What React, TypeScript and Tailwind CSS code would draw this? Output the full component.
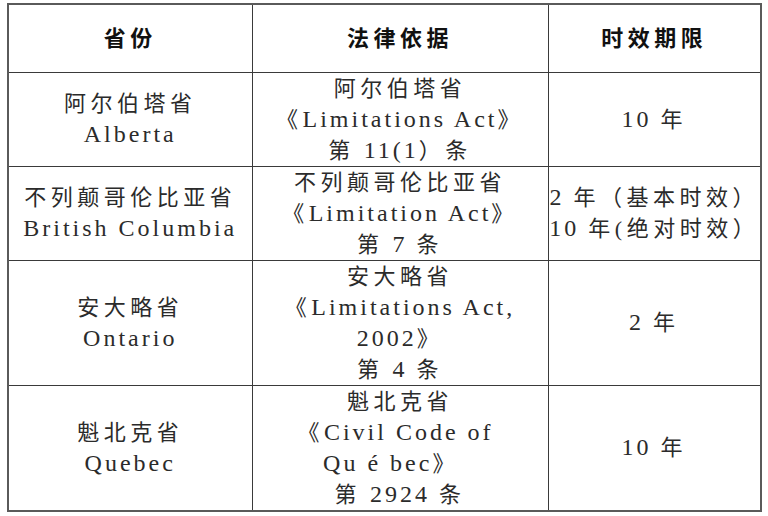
const zh = 'text-[22px] tracking-[4.5px]';

function Cell({ lines }: { lines: React.ReactNode[] }) {
  return (
    <td className="border border-[#3a3a3a] p-0 text-center align-middle">
      <div className="flex flex-col items-center">
        {lines.map((l, i) => (
          <div key={i} className="whitespace-pre leading-[31px]">
            {l}
          </div>
        ))}
      </div>
    </td>
  );
}

const Z = ({ children }: { children: React.ReactNode }) => <span className={zh}>{children}</span>;

const rows: { h: string; cells: React.ReactNode[][] }[] = [
  {
    h: 'h-[94px]',
    cells: [
      [<Z>阿尔伯塔省</Z>, 'Alberta'],
      [<Z>阿尔伯塔省</Z>, <><Z>《</Z>Limitations Act<Z>》</Z></>, <><Z>第</Z> 11(1<Z>）条</Z></>],
      [<>10 <Z>年</Z></>],
    ],
  },
  {
    h: 'h-[92px]',
    cells: [
      [<Z>不列颠哥伦比亚省</Z>, 'British Columbia'],
      [<Z>不列颠哥伦比亚省</Z>, <><Z>《</Z>Limitation Act<Z>》</Z></>, <><Z>第</Z> 7 <Z>条</Z></>],
      [<>2 <Z>年（基本时效）</Z></>, <>10 <Z>年(绝对时效）</Z></>],
    ],
  },
  {
    h: 'h-[125px]',
    cells: [
      [<Z>安大略省</Z>, 'Ontario'],
      [<Z>安大略省</Z>, <><Z>《</Z>Limitations Act,</>, <>2002<Z>》</Z></>, <><Z>第</Z> 4 <Z>条</Z></>],
      [<>2 <Z>年</Z></>],
    ],
  },
  {
    h: 'h-[124px]',
    cells: [
      [<Z>魁北克省</Z>, 'Quebec'],
      [<Z>魁北克省</Z>, <><Z>《</Z>Civil Code of </>, <>Qu é bec<Z>》</Z>  </>, <><Z>第</Z> 2924 <Z>条</Z></>],
      [<>10 <Z>年</Z></>],
    ],
  },
];

export default function App() {
  return (
    <div
      className="h-[516px] w-[768px] bg-white pl-[7px] pt-[3px] text-[24px] tracking-[3px] text-[#2b2b2b]"
      style={{ fontFamily: '"Liberation Serif", "Noto Sans CJK SC", serif' }}
    >
      <table className="w-[753px] table-fixed border-collapse border-2 border-[#5a5a5a]">
        <colgroup>
          <col className="w-[244px]" />
          <col className="w-[296px]" />
          <col className="w-[213px]" />
        </colgroup>
        <thead>
          <tr className="h-[68px]">
            {['省份', '法律依据', '时效期限'].map((t) => (
              <th
                key={t}
                className="border border-[#3a3a3a] p-0 text-center align-middle text-[22px] font-bold tracking-[4.5px] text-[#111]"
              >
                {t}
              </th>
            ))}
          </tr>
        </thead>
        <tbody>
          {rows.map((r, i) => (
            <tr key={i} className={r.h}>
              {r.cells.map((c, j) => (
                <Cell key={j} lines={c} />
              ))}
            </tr>
          ))}
        </tbody>
      </table>
    </div>
  );
}
